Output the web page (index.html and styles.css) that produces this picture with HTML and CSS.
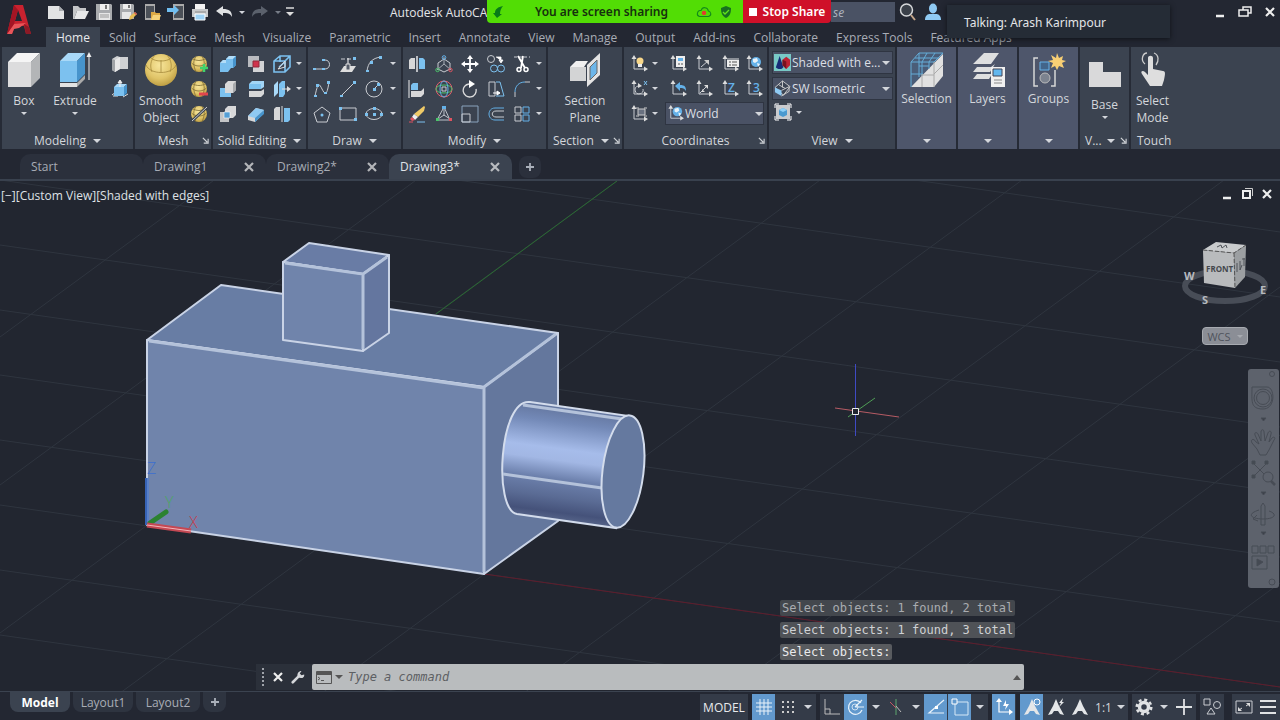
FILE: index.html
```html
<!DOCTYPE html>
<html lang="en">
<head>
<meta charset="utf-8">
<title>Autodesk AutoCAD</title>
<link rel="stylesheet" href="styles.css">
</head>
<body>
<svg class="defs" aria-hidden="true">
  <defs>
    <radialGradient id="g-gold" cx=".45" cy=".35" r=".7"><stop offset="0" stop-color="#f7e59b"/><stop offset=".6" stop-color="#e0c468"/><stop offset="1" stop-color="#b8973c"/></radialGradient>
  </defs>
  <!-- quick access -->
  <symbol id="q-new" viewBox="0 0 18 18"><path d="M1 3h11l5 5v8H1z" fill="#e2e3e4"/><path d="M12 3l5 5h-5z" fill="#a9acb0"/></symbol>
  <symbol id="q-open" viewBox="0 0 18 18"><path d="M2 3h5l2 2h6v3H6l-3 8H2z" fill="#c4c6c8"/><path d="M6 8h12l-4 8H3z" fill="#e6e7e8"/></symbol>
  <symbol id="q-save" viewBox="0 0 18 18"><path d="M1 1h15l1 1v15H1z" fill="#a9abae"/><path d="M5 1h9v6H5z" fill="#eee"/><path d="M10 2h2v4h-2z" fill="#777"/><path d="M4 10h11v7H4z" fill="#e6e6e6"/><path d="M5 12h9M5 14h9" stroke="#999"/></symbol>
  <symbol id="q-saveas" viewBox="0 0 18 18"><path d="M1 1h13l1 1v14H1z" fill="#a9abae"/><path d="M4 1h8v5H4z" fill="#eee"/><path d="M9 2h2v3H9z" fill="#777"/><path d="M3 9h9v7H3z" fill="#e6e6e6"/><path d="M10 17l1-4 5-4 2 2-5 5z" fill="#e6bd55"/><path d="M15 10l1-1 2 2-1 1z" fill="#d3555a"/></symbol>
  <symbol id="q-mopen" viewBox="0 0 18 18"><path d="M2 1h10v16H2z" fill="#aaa"/><path d="M3 3h8v12H3z" fill="#4b5058"/><path d="M8 9h4l1 1h4v7H8z" fill="#dca845"/><path d="M10 12h8l-2 5H8z" fill="#f5d27a"/></symbol>
  <symbol id="q-msave" viewBox="0 0 18 18"><path d="M6 1h11v16H6z" fill="#aaa"/><path d="M7 3h9v12H7z" fill="#4b5058"/><path d="M0 5h7V2l5 5-5 5V9H0z" fill="#6fbdf0"/></symbol>
  <symbol id="q-print" viewBox="0 0 18 18"><path d="M4 1h10v5H4z" fill="#f2f2f2"/><path d="M1 6h16v8H1z" fill="#c9cbcd"/><path d="M4 9h11" stroke="#888"/><path d="M4 11h10v6H4z" fill="#9ed2f5" stroke="#fff"/></symbol>
  <symbol id="q-undo" viewBox="0 0 18 18"><path d="M1 8l7-5v3c6 0 9 2 9 8-2-4-5-4-9-4v3z" fill="#e0e2e4"/></symbol>
  <symbol id="q-redo" viewBox="0 0 18 18"><path d="M17 8l-7-5v3c-6 0-9 2-9 8 2-4 5-4 9-4v3z" fill="#5b616c"/></symbol>
  <symbol id="q-more" viewBox="0 0 18 18"><path d="M5 5h8" stroke="#ddd" stroke-width="1.5"/><path d="M5 9h8l-4 4z" fill="#ddd"/></symbol>
  <symbol id="q-search" viewBox="0 0 18 18"><circle cx="7.500" cy="7" r="6" fill="#3a4049" stroke="#d6d8da" stroke-width="1.500"/><path d="M12 12l4 5" stroke="#c3a58a" stroke-width="2"/></symbol>
  <symbol id="q-user" viewBox="0 0 18 18"><ellipse cx="9" cy="5.500" rx="4" ry="5" fill="#8fcaf3"/><path d="M1 17c0-5 3-6 5-6h6c2 0 5 1 5 6z" fill="#8fcaf3"/></symbol>
  <!-- modeling -->
  <symbol id="box" viewBox="0 0 34 36"><path d="M1 10l9-9h23l-9 9z" fill="#f5f5f5"/><path d="M1 10h23v25H1z" fill="#dcdcdd"/><path d="M24 10l9-9v25l-9 9z" fill="#b3b5b7"/></symbol>
  <symbol id="extrude" viewBox="0 0 34 36"><path d="M2 9l8-8h17l-8 8z" fill="#a9d9f8"/><path d="M2 9h17v21H2z" fill="#7cc1ef"/><path d="M19 9l8-8v21l-8 8z" fill="#4794cc"/><path d="M2 31h17v4H2z" fill="#e2e2e2"/><path d="M19 31l8-8v4l-8 8z" fill="#aaa"/><path d="M31 28V4" stroke="#eee"/><path d="M31 0l2.500 5h-5z" fill="#eee"/></symbol>
  <symbol id="polysolid" viewBox="0 0 18 18"><path d="M1 4l5-3 3 1h8v12H9l-5 3-3-2z" fill="#cfd1d3"/><path d="M1 4l3 1v12l-3-2z" fill="#a0a3a6"/><path d="M4 5l5-3v12l-5 3z" fill="#e8e8e8"/></symbol>
  <symbol id="presspull" viewBox="0 0 18 18"><path d="M1 15l4-3M17 14l-5 3M2 16h5" stroke="#ddd" fill="none"/><path d="M3 7l3-3h10l-3 3z" fill="#a9d9f8"/><path d="M3 7h10v9H3z" fill="#7cc1ef"/><path d="M13 7l3-3v9l-3 3z" fill="#4794cc"/><path d="M9 7V2M7 3l2-3 2 3z" stroke="#eee" fill="#eee"/></symbol>
  <!-- mesh -->
  <symbol id="sphere" viewBox="0 0 34 36"><circle cx="17" cy="18" r="16" fill="url(#g-gold)"/><path d="M2 13c4 10 26 10 30 0M7 6c4 4 16 4 20 0M11 3c-5 6-5 12-3 17M23 3c5 6 5 12 3 17M17 8v12" fill="none" stroke="#a68a3c" stroke-width=".8"/></symbol>
  <symbol id="ball" viewBox="0 0 18 18"><circle cx="9" cy="9" r="8" fill="url(#g-gold)"/><path d="M1.500 8c4 4 11 4 15 0M3 4c4 2 8 2 12 0M6 1.500c-3 4-3 9 0 15M12 1.500c3 4 3 9 0 15" fill="none" stroke="#7f6c34" stroke-width=".8"/></symbol>
  <symbol id="m-more" viewBox="0 0 18 18"><use href="#ball" width="18" height="18"/><path d="M10 13h8M14 9v8" stroke="#3fd36c" stroke-width="2.500"/></symbol>
  <symbol id="m-less" viewBox="0 0 18 18"><use href="#ball" width="18" height="18"/><path d="M9 14h9" stroke="#e0454d" stroke-width="3"/></symbol>
  <symbol id="m-refine" viewBox="0 0 18 18"><use href="#ball" width="18" height="18"/><path d="M2 16L17 2" stroke="#3b4350" stroke-width="3"/><path d="M2 16L17 2" stroke="#ccc"/></symbol>
  <!-- solid editing -->
  <symbol id="union" viewBox="0 0 18 18"><path d="M1 8l3-3h3V4l3-3h7v9l-3 3h-2l-3 4H1z" fill="#79bfee"/><path d="M7 4l3-3h7l-3 3zM1 8l3-3h3v3z" fill="#b2ddf8"/><path d="M14 4l3-3v9l-3 3z" fill="#4794cc"/></symbol>
  <symbol id="intersect" viewBox="0 0 18 18"><path d="M1 1h11v11H1z" fill="#b9bbbf"/><path d="M6 6h11v11H6z" fill="#d3d4d6"/><path d="M6 6h6v6H6z" fill="#d0344d" stroke="#912b3c"/></symbol>
  <symbol id="edges" viewBox="0 0 18 18"><path d="M1 6l6-5h10v11l-5 5H1zM1 6h11v11M12 6l5-5M7 1v6M6 12l6-5" fill="none" stroke="#7cc1ef" stroke-width="1.600"/><path d="M5 14l7-8v6z" stroke="#ddd" fill="none"/></symbol>
  <symbol id="subtract" viewBox="0 0 18 18"><path d="M1 8h11v9H1z" fill="#7cc1ef"/><path d="M6 4l3-3h8v9l-3 3H6z" fill="#d8d8d9"/><path d="M14 4l3-3v9l-3 3z" fill="#a7a9ac"/></symbol>
  <symbol id="slice" viewBox="0 0 18 18"><path d="M2 4l3-3h12v6l-3 2H2z" fill="#a2d5f6"/><path d="M2 4h12v5H2z" fill="#7cc1ef"/><path d="M2 11h12l3-2v5l-3 3H2z" fill="#d6d7d8"/></symbol>
  <symbol id="thicken" viewBox="0 0 18 18"><path d="M1 5l4-4v12l-4 4z" fill="#a9d9f8"/><path d="M6 4l3-3h3v13l-2 3H6z" fill="#7cc1ef"/><path d="M9 9h6" stroke="#ddd"/><path d="M14 6l4 3-4 3z" fill="#ddd"/></symbol>
  <symbol id="interfere" viewBox="0 0 18 18"><path d="M1 7h9v10H1z" fill="#c3c5c7"/><path d="M6 4l3-3h8v9l-3 3H6z" fill="#d8d8d9"/><path d="M5 7h6v6H5z" fill="#559fd5" stroke="#fff" stroke-width=".6"/></symbol>
  <symbol id="chamfer" viewBox="0 0 18 18"><path d="M1 11l8-8 8 2v3l-9 9-7-2z" fill="#d6d7d8"/><path d="M1 11l8-8 8 2-9 8z" fill="#8fcaf3"/><path d="M8 13l9-8v4l-9 8z" fill="#4794cc"/></symbol>
  <symbol id="separate" viewBox="0 0 18 18"><path d="M1 4l2-2h4v13H1z" fill="#d6d7d8"/><path d="M9 1v16" stroke="#ddd"/><path d="M11 3h6v12l-2 2h-4z" fill="#7cc1ef"/></symbol>
  <!-- draw -->
  <symbol id="polyline" viewBox="0 0 18 18"><path d="M1 14h11c6 0 6-9 0-9H9" class="ln"/><path d="M0 13h3v2H0zM9 13h3v2H9zM9 4h3v2H9z" fill="#7cc1ef"/></symbol>
  <symbol id="extr-plane" viewBox="0 0 18 18"><path d="M1 17l4-6h12l-4 6z" fill="#ddd"/><path d="M2 4h14" class="ln" stroke-dasharray="4 2"/><path d="M9 3v11" stroke="#fff"/><path d="M7 9h4v6H7z" fill="#555c69" stroke="#ddd"/><path d="M14 2h3v3h-3z" fill="#7cc1ef"/></symbol>
  <symbol id="arc" viewBox="0 0 18 18"><path d="M2 16C3 8 7 3 16 2" class="ln"/><path d="M1 15h3v2H1zM5 6h3v3H5zM14 1h3v3h-3z" fill="#7cc1ef"/></symbol>
  <symbol id="spline" viewBox="0 0 18 18"><path d="M2 16C5 2 6 3 9 9s5 7 7-7" class="ln"/><path d="M1 15h3v2H1zM3 4h3v3H3zM11 12h3v2h-3zM14 1h3v3h-3z" fill="#7cc1ef"/></symbol>
  <symbol id="line" viewBox="0 0 18 18"><path d="M2 16L16 2" class="ln"/><path d="M1 15h3v2H1zM14 1h3v3h-3z" fill="#7cc1ef"/></symbol>
  <symbol id="circle" viewBox="0 0 18 18"><circle cx="9" cy="9" r="8" class="ln"/><path d="M9 9l4-4" class="ln"/><path d="M8 8h3v3H8zM12 3h3v3h-3z" fill="#7cc1ef"/></symbol>
  <symbol id="polygon" viewBox="0 0 18 18"><path d="M9 2l8 6-3 9H4L1 8z" class="ln"/><circle cx="9" cy="10" r="1.500" fill="#7cc1ef"/></symbol>
  <symbol id="rect" viewBox="0 0 18 18"><path d="M1 3h16v12H1z" class="ln"/><path d="M0 2h3v3H0zM15 13h3v3h-3z" fill="#7cc1ef"/></symbol>
  <symbol id="ellipse" viewBox="0 0 18 18"><ellipse cx="9" cy="9" rx="8" ry="5.500" class="ln"/><path d="M8 8h3v3H8zM0 8h3v3H0zM15 8h3v3h-3zM8 2h3v3H8z" fill="#7cc1ef"/></symbol>
  <!-- modify -->
  <symbol id="mirror" viewBox="0 0 18 18"><path d="M1 5l2-2h4v11H1z" fill="#d6d7d8"/><path d="M9 1v16" stroke="#fff" stroke-width="1.300"/><path d="M11 3h4l2 2v9h-6z" fill="#7cc1ef"/></symbol>
  <symbol id="gizmo" viewBox="0 0 18 18"><path d="M9 2v7M2 15l7-6 7 6" stroke="#a8adb5" fill="none"/><path d="M9 4l6 4v6l-6 3-6-3V8z" class="ln"/><circle cx="9" cy="2.500" r="1.800" fill="none" stroke="#64b1e8"/><circle cx="2.500" cy="15" r="1.700" fill="none" stroke="#4bc36b"/><circle cx="15.500" cy="15" r="1.700" fill="none" stroke="#df5360"/></symbol>
  <symbol id="move" viewBox="0 0 18 18"><path d="M9 3v12M3 9h12" stroke="#fff" stroke-width="1.800"/><path d="M9 0l3 4H6zM9 18l3-4H6zM0 9l4-3v6zM18 9l-4-3v6z" fill="#fff"/></symbol>
  <symbol id="copy" viewBox="0 0 18 18"><circle cx="4" cy="4" r="3.500" class="ln"/><circle cx="7" cy="13.500" r="3.500" fill="none" stroke="#7cc1ef"/><circle cx="14" cy="13.500" r="3.500" fill="none" stroke="#7cc1ef"/><path d="M9 2h5v4M12 5l2 3 2-3z" stroke="#fff" fill="#fff" stroke-width=".8"/></symbol>
  <symbol id="trim" viewBox="0 0 18 18"><path d="M1 2h16" class="ln" stroke-dasharray="3 2"/><path d="M5 1l7 12M10 1L8 13" stroke="#fff" stroke-width="1.800"/><circle cx="6" cy="14.500" r="2" fill="none" stroke="#fff" stroke-width="1.500"/><circle cx="13" cy="14.500" r="2" fill="none" stroke="#fff" stroke-width="1.500"/></symbol>
  <symbol id="align" viewBox="0 0 18 18"><path d="M1 0v18" stroke="#eee"/><path d="M3 5l2-2h5v7H3z" fill="#7cc1ef"/><path d="M3 11h10l3-3v6l-3 3H3z" fill="#d8d8d9"/></symbol>
  <symbol id="rot3d" viewBox="0 0 18 18"><circle cx="9" cy="9" r="8" fill="none" stroke="#e2616d"/><ellipse cx="9" cy="9" rx="8" ry="4" fill="none" stroke="#4bc36b"/><ellipse cx="9" cy="9" rx="4" ry="8" fill="none" stroke="#64b1e8"/><path d="M7 7h4v4H7z" class="ln"/></symbol>
  <symbol id="rotate" viewBox="0 0 18 18"><path d="M8 4a6.500 6.500 0 1 0 7 5" fill="none" stroke="#ddd" stroke-width="1.300"/><path d="M8 0l6 4-6 4z" fill="#fff"/></symbol>
  <symbol id="stretch" viewBox="0 0 18 18"><path d="M2 2h6v14H2z" class="ln"/><path d="M9 2h4l4 14H9" fill="none" stroke="#7cc1ef"/><path d="M6 13h5M10 11l3 2-3 2z" stroke="#fff" fill="#fff"/></symbol>
  <symbol id="fillet" viewBox="0 0 18 18"><path d="M2 17v-5M12 2h5" class="ln"/><path d="M2 12C2 6 6 2 12 2" fill="none" stroke="#64b1e8"/></symbol>
  <symbol id="erase" viewBox="0 0 18 18"><path d="M16 1l1 1-1 4-6 6-4-3z" fill="#efca67"/><path d="M6 9l4 3-3 3-3-3z" fill="#eee"/><path d="M4 12l3 3-3 1-2-2z" fill="#df5360"/><path d="M1 17h4" stroke="#df5360"/><path d="M9 17h8" stroke="#7cc1ef"/></symbol>
  <symbol id="scale3d" viewBox="0 0 18 18"><path d="M9 2L2 15h13zM9 2v9M9 10l-6 4M9 10l6 4" stroke="#bcc1c8" fill="none"/><path d="M7 1h4v3H7z" fill="#64b1e8"/><path d="M1 13h3v3H1z" fill="#4bc36b"/><path d="M14 13h3v3h-3z" fill="#df5360"/></symbol>
  <symbol id="scale" viewBox="0 0 18 18"><path d="M1 1h16v16H1z" fill="none" stroke="#8aa4bd"/><path d="M1 9h8v8H1z" class="ln"/></symbol>
  <symbol id="offset" viewBox="0 0 18 18"><path d="M17 3H8c-8 0-8 12 0 12h9" fill="none" stroke="#64b1e8"/><path d="M17 6H9c-5 0-5 6 0 6h8" class="ln"/></symbol>
  <symbol id="array" viewBox="0 0 18 18"><path d="M2 2h6v6H2zM2 10h6v6H2z" class="ln"/><path d="M10 2h6v6h-6zM10 10h6v6h-6z" fill="none" stroke="#64b1e8"/></symbol>
  <symbol id="secplane" viewBox="0 0 34 36"><path d="M2 15l6-6h12l-4 6z" fill="#f0f0f0"/><path d="M2 15h16v14H2z" fill="#d3d4d5"/><path d="M19 13L32 1v22L19 35z" fill="#e4e4e4"/><path d="M22 15l7-7v13l-7 7z" fill="#6cb6ea" stroke="#666"/></symbol>
  <!-- coordinates -->
  <symbol id="axes" viewBox="0 0 18 18"><path d="M4 2v12h12" class="ln"/><path d="M4 0l2.500 4h-5zM18 14l-4-2.500v5z" fill="#ddd"/></symbol>
  <symbol id="u-icon" viewBox="0 0 18 18"><use href="#axes" width="18" height="18"/><circle cx="10" cy="6" r="3.500" fill="#f7d78a"/><path d="M8 9h4v3H8z" fill="#eee"/></symbol>
  <symbol id="u-named" viewBox="0 0 18 18"><use href="#axes" width="18" height="18"/><path d="M7 1h9v11H7z" fill="#eee"/><path d="M9 3h5v3H9z" fill="#64b1e8"/><path d="M9 9h2M12 9h2" stroke="#555"/></symbol>
  <symbol id="u-origin" viewBox="0 0 18 18"><use href="#axes" width="18" height="18"/><path d="M6 12l7-6" class="ln"/><path d="M9 5h5v5z" fill="#ccc"/></symbol>
  <symbol id="u-list" viewBox="0 0 18 18"><use href="#axes" width="18" height="18"/><path d="M6 3h12v9H6z" fill="#eee"/><path d="M6 3h12v2H6z" fill="#8b9097"/><path d="M8 7h2M11 7h5M8 10h2M11 10h5" stroke="#555"/></symbol>
  <symbol id="u-world" viewBox="0 0 18 18"><use href="#axes" width="18" height="18"/><circle cx="11" cy="7" r="5" fill="#64b1e8"/><path d="M8 4l4-1 1 3-3 2-2-1zM12 8l3 1-2 3z" fill="#e8f2f8"/></symbol>
  <symbol id="u-x" viewBox="0 0 18 18"><use href="#axes" width="18" height="18"/><path d="M8 6a4 4 0 1 0 5 3" class="ln"/><path d="M14 1l3 4M17 1l-3 4" fill="none" stroke="#7cc1ef"/><path d="M8 3l4 3-4 2z" fill="#ddd"/></symbol>
  <symbol id="u-prev" viewBox="0 0 18 18"><use href="#axes" width="18" height="18"/><path d="M6 6l5-4v3c5 0 6 2 6 6-2-3-3-3-6-3v3z" fill="#64b1e8"/></symbol>
  <symbol id="u-view" viewBox="0 0 18 18"><use href="#axes" width="18" height="18"/><path d="M5 13l7-7" class="ln"/><path d="M9 5h4v4zM7 9l3 3H7z" fill="#ddd"/></symbol>
  <symbol id="u-obj" viewBox="0 0 18 18"><use href="#axes" width="18" height="18"/><path d="M8 4h7v6H8z" fill="#697180" stroke="#ccc"/><path d="M6 3h3M14 3h3M6 11h3M14 11h3" stroke="#ccc"/></symbol>
  <!-- view -->
  <symbol id="vs-shaded" viewBox="0 0 18 18"><path d="M0 0h18v18H0z" fill="#78c9c6"/><path d="M6 2l4 12c-2 3-7 2-8 0z" fill="#172c78"/><path d="M9 6l4-3 4 3v6l-4 4-4-4z" fill="#bd2233"/><path d="M9 6l4 2v8l-4-4z" fill="#771220"/></symbol>
  <symbol id="vs-iso" viewBox="0 0 18 18"><path d="M1 8l8-7 8 6-7 9z" fill="#3d4554" stroke="#ccc"/><path d="M1 8l7 3v6l-7-4z" fill="#8fcaf3"/><path d="M8 11l8-4v5l-8 5M5 5l7 4M9 1v7" fill="none" stroke="#ccc"/></symbol>
  <symbol id="vs-sel" viewBox="0 0 18 18"><path d="M2 2h14v14H2z" fill="#c9cbce"/><path d="M1 5V1h4M13 1h4v4M17 13v4h-4M5 17H1v-4" fill="none" stroke="#fff"/><path d="M5 7l4-2 4 2v5l-4 2-4-2z" fill="#4a9ad0"/><path d="M5 7l4-2 4 2-4 2z" fill="#8fd0f7"/></symbol>
  <symbol id="selection" viewBox="0 0 34 36"><path d="M1 10l8-9h24L1 35z" fill="#4a5d78"/><path d="M1 35L33 2v22l-9 11z" fill="#e1e1e1"/><path d="M1 35V10l8-9h24M1 10h23l9-9M9 1v24M17 1l-5 9v14M25 1l-6 9v7M1 22h12M5 6h24M9 14h10" fill="none" stroke="#65add8"/><path d="M24 10v25M24 22l9-9M12 22v13M12 23h12" fill="none" stroke="#aaa"/></symbol>
  <symbol id="layers" viewBox="0 0 34 36"><path d="M2 12L13 1h15l-8 11zM2 20l4-5h14l4-3-5 8zM2 27l4-5h14l3-3-5 8z" fill="#dedfe0"/><path d="M20 15h14v20H20z" fill="#f0f0f0"/><path d="M22 17h9v7h-9z" fill="#62b7ef" stroke="#445"/><path d="M23 28h8M23 31h8" stroke="#888"/></symbol>
  <symbol id="groups" viewBox="0 0 34 36"><path d="M6 6H2v28h4M19 34h4V18" fill="none" stroke="#d6d7d8" stroke-width="1.500"/><path d="M8 10h9v8H8z" fill="#42658a" stroke="#64b1e8"/><circle cx="13" cy="26" r="5" fill="#7c838f" stroke="#bbb"/><path d="M25 1l2 5 4-2-1 4 4 1-4 2 2 5-5-2-2 4-2-4-4 2 2-5-5-2 5-1-2-5 5 3z" fill="#f8cf74"/></symbol>
  <symbol id="base" viewBox="0 0 34 36"><path d="M1 10h14v10h18v15H1z" fill="#d9d9da"/></symbol>
  <symbol id="touch" viewBox="0 0 34 36"><path d="M9 12C4 8 7 1 11 1M18 1c5 2 5 8 2 12" fill="none" stroke="#ccc" stroke-width="1.300"/><path d="M12 6c0-3 5-3 5 0v11l10 2c3 0 2 4 1 9l-2 6H14L6 22c-2-3 1-4 3-2l3 3z" fill="#dedede"/></symbol>
  <!-- status -->
  <symbol id="s-grid" viewBox="0 0 18 18"><path d="M5 1v16M9 1v16M13 1v16M1 5h16M1 9h16M1 13h16" stroke="#e8f2fa"/></symbol>
  <symbol id="s-snap" viewBox="0 0 18 18"><path d="M3 4h12M3 9h12M3 14h12" stroke="#ccc" stroke-width="2" stroke-dasharray="2 3"/></symbol>
  <symbol id="s-ortho" viewBox="0 0 18 18"><path d="M2 1v15h15M2 11h5v5" stroke="#bbb" fill="none"/></symbol>
  <symbol id="s-polar" viewBox="0 0 18 18"><path d="M14 5a7 7 0 1 0 1 7M8 9h9M8 9l7-7" stroke="#e8f2fa" fill="none" stroke-width="1.200"/><circle cx="8" cy="9" r="3" fill="none" stroke="#e8f2fa" stroke-width=".8"/></symbol>
  <symbol id="s-iso" viewBox="0 0 18 18"><path d="M9 1v16" stroke="#5da86e"/><path d="M3 4l6 6" stroke="#c35762"/><path d="M9 8l5 6" stroke="#bbb"/></symbol>
  <symbol id="s-track" viewBox="0 0 18 18"><path d="M17 2L2 15h15" stroke="#e8f2fa" fill="none" stroke-width="1.200"/><path d="M8 8h3v3H8z" fill="#fff"/></symbol>
  <symbol id="s-osnap" viewBox="0 0 18 18"><path d="M4 4h13v13H4z" stroke="#d6e8f6" fill="none"/><path d="M1 1h5v5H1z" fill="#6299cd" stroke="#fff"/></symbol>
  <symbol id="s-ucs" viewBox="0 0 18 18"><path d="M4 3v11h11" stroke="#fff" fill="none" stroke-width="1.200"/><path d="M4 0l3 4H1zM18 14l-4-3v6zM11 2L8 8h3l-1 4 4-6h-3z" fill="#fff"/></symbol>
  <symbol id="s-ann" viewBox="0 0 18 18"><path d="M9 1l3 7 5 9-4-1-2-3H7l-2 3-4 1 5-9z" fill="#e4e6e8"/></symbol>
  <symbol id="s-annv" viewBox="0 0 18 18"><use href="#s-ann" width="18" height="18"/><circle cx="14" cy="4" r="3" fill="#6299cd" stroke="#fff"/></symbol>
  <symbol id="s-anna" viewBox="0 0 18 18"><use href="#s-ann" width="18" height="18"/><path d="M16 0l-4 5h2l-2 4 5-5h-2z" fill="#e4e6e8"/></symbol>
  <symbol id="s-gear" viewBox="0 0 18 18"><circle cx="9" cy="9" r="4.500" fill="none" stroke="#e0e2e4" stroke-width="3.500"/><circle cx="9" cy="9" r="7.300" fill="none" stroke="#e0e2e4" stroke-width="2.500" stroke-dasharray="3 2.730"/></symbol>
  <symbol id="s-plus" viewBox="0 0 18 18"><path d="M9 1v16M1 9h16" stroke="#e0e2e4" stroke-width="1.800"/></symbol>
  <symbol id="s-iso2" viewBox="0 0 18 18"><path d="M1 1h6v6H1zM4 16l4-6 4 6z" class="ln"/><circle cx="14" cy="7" r="3.500" class="ln"/></symbol>
  <symbol id="s-full" viewBox="0 0 18 18"><path d="M1 3h16v12H1z" class="ln"/><path d="M11 5h4v4zM3 9v4h4z" fill="#ddd"/><path d="M14 6l-3 2M4 12l3-2" stroke="#ddd"/></symbol>
  <symbol id="s-menu" viewBox="0 0 18 18"><path d="M1 3h16M1 9h16M1 15h16" stroke="#e0e2e4" stroke-width="2"/></symbol>
  <!-- window -->
  <symbol id="w-min" viewBox="0 0 14 14"><path d="M3 11h8" stroke="#eee" stroke-width="2.500"/></symbol>
  <symbol id="w-res" viewBox="0 0 14 14"><path d="M5 5V2h8v6h-3M1 5h9v6H1z" stroke="#eee" stroke-width="1.500" fill="none"/></symbol>
  <symbol id="w-box" viewBox="0 0 14 14"><path d="M3 4h7v7H3z" stroke="#eee" stroke-width="2" fill="none"/><path d="M5 1.500h7.500V9" stroke="#ccc" fill="none"/></symbol>
  <symbol id="w-x" viewBox="0 0 14 14"><path d="M3 3l8 8M11 3l-8 8" stroke="#eee" stroke-width="2.200"/></symbol>
  <symbol id="w-plus" viewBox="0 0 14 14"><path d="M3 7h8M7 3v8" stroke="#aab0ba" stroke-width="1.800"/></symbol>
  <symbol id="launch" viewBox="0 0 8 8"><path d="M1 1l5 5M7 2v5H2" stroke="#d0d3d7" stroke-width="1.300" fill="none"/></symbol>
</svg>

<header class="top">
  <svg class="logo" viewBox="0 0 24 32" role="img" aria-label="AutoCAD"><path d="M7 1h9l8 29h-5l-2-8H8l-3 8H0z" fill="#c9222f"/><path d="M11 6l4 11H8z" fill="#232732"/><path d="M0 30l7-10 12-1-7 5-5 1-2 5z" fill="#e8565a"/><path d="M7 1l4 5-4 14-7 10z" fill="#a51524"/><path d="M17 20l5 3 2 7h-5z" fill="#8b1a26"/></svg>
  <div class="titlebar">
    <div class="qat">
      <button aria-label="New"><svg><use href="#q-new"/></svg></button>
      <button aria-label="Open"><svg><use href="#q-open"/></svg></button>
      <button aria-label="Save"><svg><use href="#q-save"/></svg></button>
      <button aria-label="Save as"><svg><use href="#q-saveas"/></svg></button>
      <button aria-label="Open from mobile"><svg><use href="#q-mopen"/></svg></button>
      <button aria-label="Save to mobile"><svg><use href="#q-msave"/></svg></button>
      <button aria-label="Plot"><svg><use href="#q-print"/></svg></button>
      <button aria-label="Undo"><svg><use href="#q-undo"/></svg></button>
      <button class="slim" aria-label="Undo list"><i class="caret"></i></button>
      <button aria-label="Redo"><svg><use href="#q-redo"/></svg></button>
      <button class="slim dim" aria-label="Redo list"><i class="caret"></i></button>
      <button class="slim" aria-label="Customize"><svg><use href="#q-more"/></svg></button>
    </div>
    <div class="app-title">Autodesk AutoCA</div>
    <div class="account">
      <input class="search" type="text" aria-label="Search" value="se">
      <button aria-label="Find"><svg><use href="#q-search"/></svg></button>
      <button aria-label="Sign in"><svg><use href="#q-user"/></svg></button>
    </div>
    <div class="win">
      <button aria-label="Minimize"><svg><use href="#w-min"/></svg></button>
      <button aria-label="Restore"><svg><use href="#w-res"/></svg></button>
      <button aria-label="Close"><svg><use href="#w-x"/></svg></button>
    </div>
  </div>
  <nav class="menu">
    <button class="on">Home</button><button>Solid</button><button>Surface</button><button>Mesh</button><button>Visualize</button><button>Parametric</button><button>Insert</button><button>Annotate</button><button>View</button><button>Manage</button><button>Output</button><button>Add-ins</button><button>Collaborate</button><button>Express Tools</button><button>Featured Apps</button>
  </nav>
  <div class="share">
    <div class="share-on">
      <svg class="share-arrow" viewBox="0 0 12 14"><path d="M10 1C5 2 2 4 2 8H0l4 5 5-4H7c0-3 1-6 3-8z" fill="#087b18"/></svg>
      <span>You are screen sharing</span>
      <svg class="share-ic" viewBox="0 0 18 14"><path d="M4 12h10c4-1 3-5 0-6-1-5-7-5-8-1-5 0-6 6-2 7z" fill="none" stroke="#138a1b" stroke-width="1.200"/><circle cx="9" cy="8" r="2.500" fill="#e33b2e"/></svg>
      <svg class="share-ic small" viewBox="0 0 12 14"><path d="M6 1l5 2c0 5-1 8-5 10C2 11 1 8 1 3z" fill="#177020"/><path d="M3 7l2 2 4-4" stroke="#62e31c" stroke-width="1.300" fill="none"/></svg>
    </div>
    <button class="stop"><i></i>Stop Share</button>
  </div>
  <div class="talking">Talking: Arash Karimpour</div>
</header>

<section class="ribbon" aria-label="Ribbon">
  <div class="panel p-model">
    <div class="body">
      <button class="big"><svg><use href="#box"/></svg>Box<i class="caret"></i></button>
      <button class="big"><svg><use href="#extrude"/></svg>Extrude<i class="caret"></i></button>
      <div class="icons c1"><svg><use href="#polysolid"/></svg><svg><use href="#presspull"/></svg></div>
    </div>
    <div class="foot">Modeling<i class="caret lg"></i></div>
  </div>
  <div class="panel p-mesh">
    <div class="body">
      <button class="big"><svg><use href="#sphere"/></svg>Smooth<br>Object</button>
      <div class="icons c1"><svg><use href="#m-more"/></svg><svg><use href="#m-less"/></svg><svg><use href="#m-refine"/></svg></div>
    </div>
    <div class="foot">Mesh<svg class="launch"><use href="#launch"/></svg></div>
  </div>
  <div class="panel p-solid">
    <div class="body">
      <div class="icons c3"><svg><use href="#union"/></svg><svg><use href="#intersect"/></svg><svg><use href="#edges"/></svg><i class="caret"></i><svg><use href="#subtract"/></svg><svg><use href="#slice"/></svg><svg><use href="#thicken"/></svg><i class="caret"></i><svg><use href="#interfere"/></svg><svg><use href="#chamfer"/></svg><svg><use href="#separate"/></svg><i class="caret"></i></div>
    </div>
    <div class="foot">Solid Editing<i class="caret lg"></i></div>
  </div>
  <div class="panel p-draw">
    <div class="body">
      <div class="icons c3"><svg><use href="#polyline"/></svg><svg><use href="#extr-plane"/></svg><svg><use href="#arc"/></svg><i class="caret"></i><svg><use href="#spline"/></svg><svg><use href="#line"/></svg><svg><use href="#circle"/></svg><i class="caret"></i><svg><use href="#polygon"/></svg><svg><use href="#rect"/></svg><svg><use href="#ellipse"/></svg><i class="caret"></i></div>
    </div>
    <div class="foot">Draw<i class="caret lg"></i></div>
  </div>
  <div class="panel p-modify">
    <div class="body">
      <div class="icons c5"><svg><use href="#mirror"/></svg><svg><use href="#gizmo"/></svg><svg><use href="#move"/></svg><svg><use href="#copy"/></svg><svg><use href="#trim"/></svg><i class="caret"></i><svg><use href="#align"/></svg><svg><use href="#rot3d"/></svg><svg><use href="#rotate"/></svg><svg><use href="#stretch"/></svg><svg><use href="#fillet"/></svg><i class="caret"></i><svg><use href="#erase"/></svg><svg><use href="#scale3d"/></svg><svg><use href="#scale"/></svg><svg><use href="#offset"/></svg><svg><use href="#array"/></svg><i class="caret"></i></div>
    </div>
    <div class="foot">Modify<i class="caret lg"></i></div>
  </div>
  <div class="panel p-section">
    <div class="body"><button class="big"><svg><use href="#secplane"/></svg>Section<br>Plane</button></div>
    <div class="foot">Section<i class="caret lg"></i><svg class="launch"><use href="#launch"/></svg></div>
  </div>
  <div class="panel p-coord">
    <div class="body">
      <div class="icons cc"><svg><use href="#u-icon"/></svg><i class="caret"></i><svg><use href="#u-named"/></svg><svg><use href="#u-origin"/></svg><svg><use href="#u-list"/></svg><svg><use href="#u-world"/></svg><svg><use href="#u-x"/></svg><i class="caret"></i><svg><use href="#u-prev"/></svg><svg><use href="#u-view"/></svg><svg class="glyph"><use href="#axes"/><text x="7" y="12">Z</text></svg><svg class="glyph"><use href="#axes"/><text x="8" y="12">3</text></svg><svg><use href="#u-obj"/></svg><i class="caret"></i>
        <label class="pick world"><svg><use href="#u-world"/></svg><select aria-label="Coordinate system"><option>World</option></select><i class="caret lg"></i></label></div>
    </div>
    <div class="foot">Coordinates<svg class="launch"><use href="#launch"/></svg></div>
  </div>
  <div class="panel p-view">
    <div class="body col">
      <label class="pick"><svg><use href="#vs-shaded"/></svg><select aria-label="Visual style"><option>Shaded with e...</option></select><i class="caret lg"></i></label>
      <label class="pick"><svg><use href="#vs-iso"/></svg><select aria-label="View"><option>SW Isometric</option></select><i class="caret lg"></i></label>
      <button class="mini" aria-label="Selection view"><svg><use href="#vs-sel"/></svg><i class="caret"></i></button>
    </div>
    <div class="foot">View<i class="caret lg"></i></div>
  </div>
  <div class="panel tint"><div class="body"><button class="big"><svg><use href="#selection"/></svg>Selection</button></div><div class="foot"><i class="caret lg"></i></div></div>
  <div class="panel tint"><div class="body"><button class="big"><svg><use href="#layers"/></svg>Layers</button></div><div class="foot"><i class="caret lg"></i></div></div>
  <div class="panel tint"><div class="body"><button class="big"><svg><use href="#groups"/></svg>Groups</button></div><div class="foot"><i class="caret lg"></i></div></div>
  <div class="panel p-base"><div class="body"><button class="big"><svg><use href="#base"/></svg>Base<i class="caret"></i></button></div><div class="foot">V...<i class="caret lg"></i><svg class="launch"><use href="#launch"/></svg></div></div>
  <div class="panel p-touch"><div class="body"><button class="big"><svg><use href="#touch"/></svg>Select<br>Mode</button></div><div class="foot">Touch</div></div>
</section>

<nav class="files" aria-label="Drawings">
  <div class="file">Start</div>
  <div class="file">Drawing1<button aria-label="Close Drawing1"><svg><use href="#w-x"/></svg></button></div>
  <div class="file">Drawing2*<button aria-label="Close Drawing2"><svg><use href="#w-x"/></svg></button></div>
  <div class="file on">Drawing3*<button aria-label="Close Drawing3"><svg><use href="#w-x"/></svg></button></div>
  <button class="add" aria-label="New drawing"><svg><use href="#w-plus"/></svg></button>
</nav>

<main class="viewport">
  <svg class="scene" viewBox="0 181 1280 510" preserveAspectRatio="xMinYMin slice" role="img" aria-label="Shaded solid model">
    <defs><linearGradient id="cyl" gradientUnits="userSpaceOnUse" x1="577" y1="407" x2="562" y2="521">
      <stop offset="0" stop-color="#61739b"/><stop offset=".15" stop-color="#7389b7"/><stop offset=".38" stop-color="#a6bcea"/><stop offset=".48" stop-color="#a2b7e4"/><stop offset=".64" stop-color="#6d81ad"/><stop offset=".8" stop-color="#5a6b94"/><stop offset=".93" stop-color="#45527a"/><stop offset="1" stop-color="#566489"/></linearGradient></defs>
    <g stroke="#2f353f" stroke-width="1">
      <path d="M0-15l1280 182M0 50l1280 182M0 115l1280 182M0 180l1280 182M0 245l1280 182M0 310l1280 182M0 375l1280 182M0 440l1280 182M0 505l1280 182M0 570l1280 182M0 635l1280 182"/>
      <path d="M0 337l1280-938M0 485l1280-938M0 633l1280-938M0 781l1280-938M0 929l1280-938M0 1077l1280-938M0 1225l1280-938M0 1373l1280-938M0 1521l1280-938"/>
    </g>
    <path d="M484 574l796 113" stroke="#5f1c2b"/>
    <path d="M436 314l181-133" stroke="#2a6b32"/>
    <g stroke="#c9d3e6" stroke-width="2" stroke-linejoin="round">
      <path d="M147 340l74-55 337 48-74 54z" fill="#687da4"/>
      <path d="M484 387l74-54v188l-74 53z" fill="#64779d"/>
      <path d="M147 340l337 47v187l-337-49z" fill="#7084ab"/>
      <path d="M283 262l26-19 80 12-26 19z" fill="#697ca5"/>
      <path d="M363 274l26-19v78l-26 18z" fill="#64769f"/>
      <path d="M283 262l80 12v77l-80-11z" fill="#7084ab"/>
    </g>
    <g fill="none" stroke="#b4c2da" stroke-width="3">
      <path d="M149 341l335 47v184M484 387l72-53M285 263l78 11v75M363 274l24-17"/>
    </g>
    <g stroke="#d3dcec" stroke-width="2">
      <path d="M530 402l99 14-13 112-99-14C493 510 499 398 530 402z" fill="url(#cyl)"/>
      <path d="M523 405l99 14M503 474l99 14" stroke="#b4c2da" stroke-width="3"/>
      <ellipse cx="623" cy="471.500" rx="20.500" ry="56.500" transform="rotate(7 623 471.500)" fill="#65799f"/>
    </g>
    <path d="M147 525v-47" stroke="#3763b6" stroke-width="4"/><path d="M148 525v-47" stroke="#7e9ed8"/>
    <path d="M150 523l16-11" stroke="#2c8230" stroke-width="5" stroke-linecap="round"/>
    <path d="M147 525l44 6" stroke="#c44853" stroke-width="5"/><path d="M147 525l44 6" stroke="#f3b4ba"/>
    <g class="axis"><text x="147" y="474" fill="#3c6fd0">Z</text><text x="165" y="508" fill="#4ca464">Y</text><text x="189" y="528" fill="#c43b4c">X</text></g>
    <path d="M855.500 364v72" stroke="#3f4ac4"/><path d="M835 408l64 9" stroke="#b65b64"/><path d="M848 417l27-19" stroke="#4f9e56"/><path d="M852.500 408.500h6v6h-6z" fill="#222630" stroke="#eee"/>
  </svg>
  <div class="vp-head">
    <span>[−][Custom View][Shaded with edges]</span>
    <div class="vp-win"><svg><use href="#w-min"/></svg><svg><use href="#w-box"/></svg><svg><use href="#w-x"/></svg></div>
  </div>
  <div class="cube">
    <svg viewBox="0 0 92 70" role="img" aria-label="View cube: front">
      <ellipse cx="46" cy="47" rx="40" ry="15" fill="none" stroke="#484d57" stroke-width="6"/>
      <path d="M24 11l13-8 30 3-12 8z" fill="#c9cbcd"/><path d="M24 11l31 3 1 35-31-5z" fill="#b9bbbd"/><path d="M55 14l12-8-1 32-10 11z" fill="#9c9fa2"/>
      <path d="M24 11l31 3 12-8M55 14l1 35" stroke="#555" stroke-dasharray="4 2" fill="none"/>
      <text x="27" y="33" font-size="8" font-weight="700" fill="#44484d">FRONT</text>
      <path d="M58 24v9M61 22v9l2-5M65 19v8M63 20h3M38 8l4-2 1 3 4-3 1 3" stroke="#50545a" fill="none"/>
      <g font-size="11" font-weight="700" fill="#b7babf"><text x="5" y="41">W</text><text x="23" y="65">S</text><text x="81" y="55">E</text></g>
    </svg>
    <button class="wcs">WCS<i class="caret"></i></button>
  </div>
  <div class="navbar" role="toolbar" aria-label="Navigation">
    <svg viewBox="0 0 31 219" fill="none" stroke="#474c55" stroke-width="1">
      <circle cx="24" cy="5" r="2.500"/><path d="M4 18h15c8 0 9 22-4 22S4 32 4 18z"/><circle cx="15" cy="29" r="6.500"/><circle cx="15" cy="29" r="9"/>
      <path d="M13 49h5l-2.500 3zM13 123h5l-2.500 3zM13 163h5l-2.500 3z" fill="#3c414a"/>
      <path d="M9 80l-5-6c-2-4 2-5 4-1l3 2-4-9c-1-3 2-3 3-1l3 7v-9c0-3 3-3 3 0l1 9 3-8c1-3 4-2 3 1l-2 8 3-4c2-2 4 0 2 2l-5 10-3 5H12z"/>
      <path d="M5 94l14 14M19 94L5 108"/><circle cx="20" cy="108" r="5" fill="#5d626c"/><path d="M23 112l4 4" stroke-width="2.500"/><path d="M4 92h3v3H4zM17 92h3v3h-3zM4 106h3v3H4z" fill="#454a53"/>
      <path d="M13 137l2-3 2 3v19h-4zM11 141c-13 4-8 9 4 9s15-5 6-8M9 146l-4 4 5 2"/>
      <path d="M4 177h6v7H4zM12 177h6v7h-6zM20 177h6v7h-6zM4 187h15v13H4z"/><path d="M9 190l6 3-6 4z" fill="#454a53"/><circle cx="24" cy="213" r="3"/>
    </svg>
  </div>
  <div class="command">
    <div class="history"><span class="old">Select objects: 1 found, 2 total</span><span class="mid">Select objects: 1 found, 3 total</span><span>Select objects:</span></div>
    <div class="cmdrow">
      <div class="handle"><i class="grip"></i>
        <button aria-label="Close command line"><svg viewBox="0 0 14 14"><use href="#w-x"/></svg></button>
        <button aria-label="Customize"><svg viewBox="0 0 16 16"><path d="M2 14l7-7" stroke="#d5d7da" stroke-width="3" stroke-linecap="round"/><path d="M8 8C6 4 9 1 12 1l-2 3 2 2 3-1c1 3-3 6-7 3z" fill="#d5d7da"/></svg></button></div>
      <label class="cmdline"><svg viewBox="0 0 16 13"><path d="M.5.500h15v12H.5z" fill="none" stroke="#555"/><path d="M0 1h16v3H0z" fill="#555"/><path d="M2 6l2 1.500L2 9M5 9.500h3" fill="none" stroke="#555"/></svg><i class="caret dark"></i><input type="text" placeholder="Type a command" aria-label="Command"><i class="caret up"></i></label>
    </div>
  </div>
</main>

<footer class="status">
  <nav class="layouts"><button class="on">Model</button><button>Layout1</button><button>Layout2</button><button class="plus" aria-label="New layout"><svg><use href="#w-plus"/></svg></button></nav>
  <div class="tools">
    <button class="model">MODEL</button>
    <div class="set"><button class="hot" aria-label="Grid"><svg><use href="#s-grid"/></svg></button><button aria-label="Snap"><svg><use href="#s-snap"/></svg></button><button class="drop" aria-label="Snap options"><i class="caret lg"></i></button></div>
    <div class="set"><button aria-label="Ortho"><svg><use href="#s-ortho"/></svg></button><button class="hot" aria-label="Polar"><svg><use href="#s-polar"/></svg></button><button class="drop" aria-label="Polar options"><i class="caret lg"></i></button><button aria-label="Isodraft"><svg><use href="#s-iso"/></svg></button><button class="drop" aria-label="Isodraft options"><i class="caret lg"></i></button><button class="hot" aria-label="Tracking"><svg><use href="#s-track"/></svg></button><button class="hot" aria-label="Object snap"><svg><use href="#s-osnap"/></svg></button><button class="drop" aria-label="Object snap options"><i class="caret lg"></i></button></div>
    <div class="set"><button class="hot" aria-label="Dynamic UCS"><svg><use href="#s-ucs"/></svg></button></div>
    <div class="set"><button class="hot" aria-label="Annotation visibility"><svg><use href="#s-annv"/></svg></button><button aria-label="Auto scale"><svg><use href="#s-anna"/></svg></button><button aria-label="Annotation scale"><svg><use href="#s-ann"/></svg></button><button class="ratio">1:1<i class="caret lg"></i></button></div>
    <div class="set"><button aria-label="Workspace"><svg><use href="#s-gear"/></svg></button><button class="drop" aria-label="Workspace options"><i class="caret lg"></i></button><button aria-label="Monitor"><svg><use href="#s-plus"/></svg></button></div>
    <div class="set"><button aria-label="Isolate objects"><svg><use href="#s-iso2"/></svg></button></div>
    <div class="set last"><button aria-label="Clean screen"><svg><use href="#s-full"/></svg></button><button aria-label="Customization"><svg><use href="#s-menu"/></svg></button></div>
  </div>
</footer>
</body>
</html>
```
FILE: styles.css
```css
* { box-sizing: border-box; }
html, body { height: 100%; }
body { margin: 0; display: flex; flex-direction: column; background: #222630; color: #d3d6db; font: 12px/17px "Open Sans", "Noto Sans", sans-serif; overflow: hidden; }
button, input, select { font: inherit; color: inherit; background: none; border: 0; padding: 0; margin: 0; }
button { display: flex; align-items: center; justify-content: center; white-space: nowrap; }
svg { display: block; flex: none; }
.defs { position: absolute; width: 0; height: 0; }
.ln { fill: none; stroke: #c9ccd1; stroke-width: 1; }
.caret { width: 0; height: 0; flex: none; border: 3px solid transparent; border-top-color: #d3d6db; border-bottom: 0; }
.caret.lg { border-width: 4px 4px 0; }
.dim .caret { border-top-color: #777d87; }
.caret.dark { border-width: 4px 4px 0; border-top-color: #555; }
.caret.up { border: 4px solid transparent; border-top: 0; border-bottom: 5px solid #555; }

.top { position: relative; height: 47px; flex: none; padding-left: 44px; background: #232732; }
.logo { position: absolute; left: 7px; top: 4px; width: 24px; height: 32px; }
.titlebar { display: flex; align-items: center; height: 24px; }
.qat { display: flex; align-items: center; }
.qat button { width: 24px; height: 22px; }
.qat button.slim { width: 12px; }
.qat svg { width: 18px; height: 18px; }
.app-title { flex: 1; padding-left: 94px; color: #e3e5e8; white-space: nowrap; }
.account { display: flex; align-items: center; margin-right: 268px; }
.account .search { width: 64px; height: 20px; padding-left: 2px; background: #4a5264; color: #aeb4bf; font-style: italic; }
.account button { width: 25px; }
.account button svg { width: 18px; height: 18px; }
.win { display: flex; gap: 11px; padding-right: 3px; }
.win svg { width: 14px; height: 14px; }
.menu { display: flex; height: 23px; padding: 3px 0 0 2px; }
.menu button { height: 20px; padding: 0 9px; color: #a9adb6; }
.menu .on { background: #3b4350; color: #e8eaed; padding: 0 10px; }

.share { position: absolute; left: 487px; top: 0; display: flex; height: 23px; font-weight: 600; font-family: "Noto Sans", sans-serif; border-radius: 0 0 4px 4px; overflow: hidden; }
.share-on { display: flex; align-items: center; width: 256px; background: #52dd05; color: #16300e; }
.share-arrow { width: 12px; height: 14px; margin: 0 30px 0 6px; }
.share-on span { width: 157px; white-space: nowrap; }
.share-ic { width: 16px; height: 14px; margin-left: 4px; }
.share-ic.small { width: 12px; margin-left: 8px; }
.stop { width: 88px; gap: 6px; background: #cf1029; color: #fff; }
.stop i { width: 8px; height: 8px; background: #fff; }
.talking { position: absolute; left: 947px; top: 5px; width: 223px; height: 33px; padding: 9px 17px; background: #252c36; color: #e3e5e8; font-family: "Noto Sans", sans-serif; box-shadow: 0 1px 5px #0f1218; }

.ribbon { display: flex; flex: none; height: 102px; padding-left: 2px; gap: 2px; background: #262b36; }
.panel { display: flex; flex-direction: column; background: #3b4350; flex: none; overflow: hidden; }
.panel:last-child { flex: 1; }
.body { flex: 1; display: flex; align-items: flex-start; padding-top: 4px; }
.body.col { flex-direction: column; gap: 3px; padding: 4px 2px 0 3px; }
.foot { position: relative; display: flex; align-items: center; justify-content: center; height: 17px; gap: 7px; white-space: nowrap; }
.launch { width: 7px; height: 7px; position: absolute; right: 2px; top: 5px; }
.big { flex-direction: column; line-height: 17px; white-space: normal; }
.big svg { width: 34px; height: 36px; margin: 1px 0 4px; }
.big .caret { margin-top: 3px; }
.tint { width: 59px; background: #4e566b; }
.tint .big { width: 59px; }
.tint .big svg { margin-bottom: 2px; }
.p-model { width: 131px; }
.p-model .big:nth-child(1) { width: 44px; }
.p-model .big:nth-child(2) { width: 58px; }
.p-mesh { width: 76px; }
.p-mesh .big { width: 52px; }
.p-solid { width: 93px; }
.p-draw { width: 93px; }
.p-modify { width: 143px; }
.p-section { width: 74px; }
.p-section .big { width: 74px; }
.p-section .foot { justify-content: flex-start; padding-left: 5px; }
.p-coord { width: 143px; }
.p-view { width: 126px; }
.p-base { width: 49px; }
.p-base .big { width: 49px; }
.p-base .big svg { margin-bottom: 8px; }
.p-base .foot { justify-content: flex-start; padding-left: 5px; gap: 5px; }
.p-touch .big { width: 43px; }
.p-touch .foot { justify-content: flex-start; padding-left: 6px; }
.icons { display: grid; grid-auto-rows: 25px; align-items: center; justify-items: center; }
.icons > svg, .mini svg { width: 18px; height: 18px; }
.glyph { overflow: visible; font-weight: 600; fill: #64b1e8; }
.c1 { grid-template-columns: 24px; }
.p-model .c1 { padding-left: 4px; }
.c3 { grid-template-columns: 30px 26px 26px 8px; }
.p-draw .c3 { grid-template-columns: 28px 24px 28px 9px; }
.c5 { grid-template-columns: 27px 27px 25px 27px 25px 10px; }
.cc { grid-template-columns: 26px 12px 27px 26px 26px 22px; padding-left: 2px; }
.cc > .caret { justify-self: start; }
.pick { display: flex; align-items: center; height: 23px; width: 121px; padding: 0 2px 0 1px; gap: 1px; background: #4a5265; border: 1px solid #2f3542; }
.pick svg { width: 17px; height: 17px; }
.pick select { flex: 1; min-width: 0; appearance: none; color: #dcdfe4; }
.world { grid-column: 3 / span 4; width: 99px; padding-right: 0; }
.mini { gap: 4px; margin-left: 2px; }

.files { display: flex; flex: none; height: 32px; padding: 5px 0 0 20px; background: #232732; border-bottom: 2px solid #39414e; }
.file { display: flex; align-items: center; justify-content: space-between; width: 123px; padding: 0 10px 0 11px; color: #a7acb5; background: #2b303c; border-radius: 10px 10px 0 0; }
.file.on { background: #3b4350; color: #e0e3e7; }
.file svg { width: 14px; height: 14px; opacity: .7; }
.add { width: 22px; height: 22px; margin: 2px 0 0 7px; background: #2b303c; border-radius: 8px; }
.add svg, .plus svg { width: 14px; height: 14px; }

.viewport { position: relative; flex: 1; min-height: 0; overflow: hidden; background: #222630; }
.scene { position: absolute; inset: 0; width: 100%; height: 100%; }
.axis { font: 300 16px "Open Sans", sans-serif; }
.vp-head { position: relative; display: flex; justify-content: space-between; padding: 6px 6px 0 1px; color: #dfe1e5; }
.vp-win { display: flex; gap: 6px; }
.vp-win svg { width: 14px; height: 14px; }
.cube { position: absolute; right: 9px; top: 58px; width: 92px; display: flex; flex-direction: column; align-items: center; gap: 18px; }
.cube svg { width: 92px; height: 70px; }
.wcs { width: 46px; height: 18px; gap: 6px; border: 1px solid #a7aab0; border-radius: 4px; background: #8b8e96; color: #50545d; font-size: 11px; }
.wcs .caret { border-top-color: #a7aab0; }
.navbar { position: absolute; right: 1px; top: 188px; width: 31px; border-radius: 3px; background: #5d626c; }
.navbar svg { width: 31px; height: 219px; }
.command { position: absolute; left: 20%; right: 20%; bottom: 1px; font-family: "DejaVu Sans Mono", monospace; }
.history { display: flex; flex-direction: column; align-items: flex-start; gap: 6px; margin: 0 0 4px 524px; line-height: 16px; color: #e9eaec; white-space: nowrap; }
.history span { padding: 0 2px; background: #595b5f; border-radius: 2px; }
.history .mid { background: #4f5257; color: #cfd1d4; }
.history .old { background: #43474d; color: #a9acb0; }
.cmdrow { display: flex; height: 26px; }
.handle { display: flex; align-items: center; gap: 6px; width: 56px; padding-left: 6px; background: #2b303a; }
.handle svg { width: 14px; height: 14px; }
.grip { width: 3px; height: 18px; border-left: 2px dotted #9fa3aa; }
.cmdline { flex: 1; display: flex; align-items: center; gap: 3px; padding: 0 3px 0 4px; background: #b9bcbe; border-radius: 2px; }
.cmdline svg { width: 16px; height: 13px; }
.cmdline input { flex: 1; min-width: 0; padding-left: 2px; font-style: italic; }
.cmdline input::placeholder { color: #5d6063; opacity: 1; }

.status { display: flex; justify-content: space-between; flex: none; height: 29px; background: #232732; border-top: 1px solid #3b4350; }
.layouts { display: flex; gap: 3px; padding-left: 10px; height: 20px; }
.layouts button { width: 60px; background: #2e3440; color: #a9adb6; border-radius: 0 0 8px 8px; }
.layouts .on { background: #3b4350; color: #fff; font-weight: 700; }
.layouts button:nth-child(3) { width: 64px; }
.layouts .plus { width: 23px; }
.tools { display: flex; gap: 4px; padding-top: 2px; }
.tools button { height: 26px; width: 24px; background: #343b48; }
.tools svg { width: 18px; height: 18px; }
.tools .model { width: 48px; color: #e8eaed; }
.set { display: flex; }
.tools .hot { background: #6299cd; border-right: 1px solid #343b48; }
.tools .drop { width: 16px; }
.tools .ratio { width: 36px; gap: 5px; }
.set.last { padding-left: 4px; }
```
